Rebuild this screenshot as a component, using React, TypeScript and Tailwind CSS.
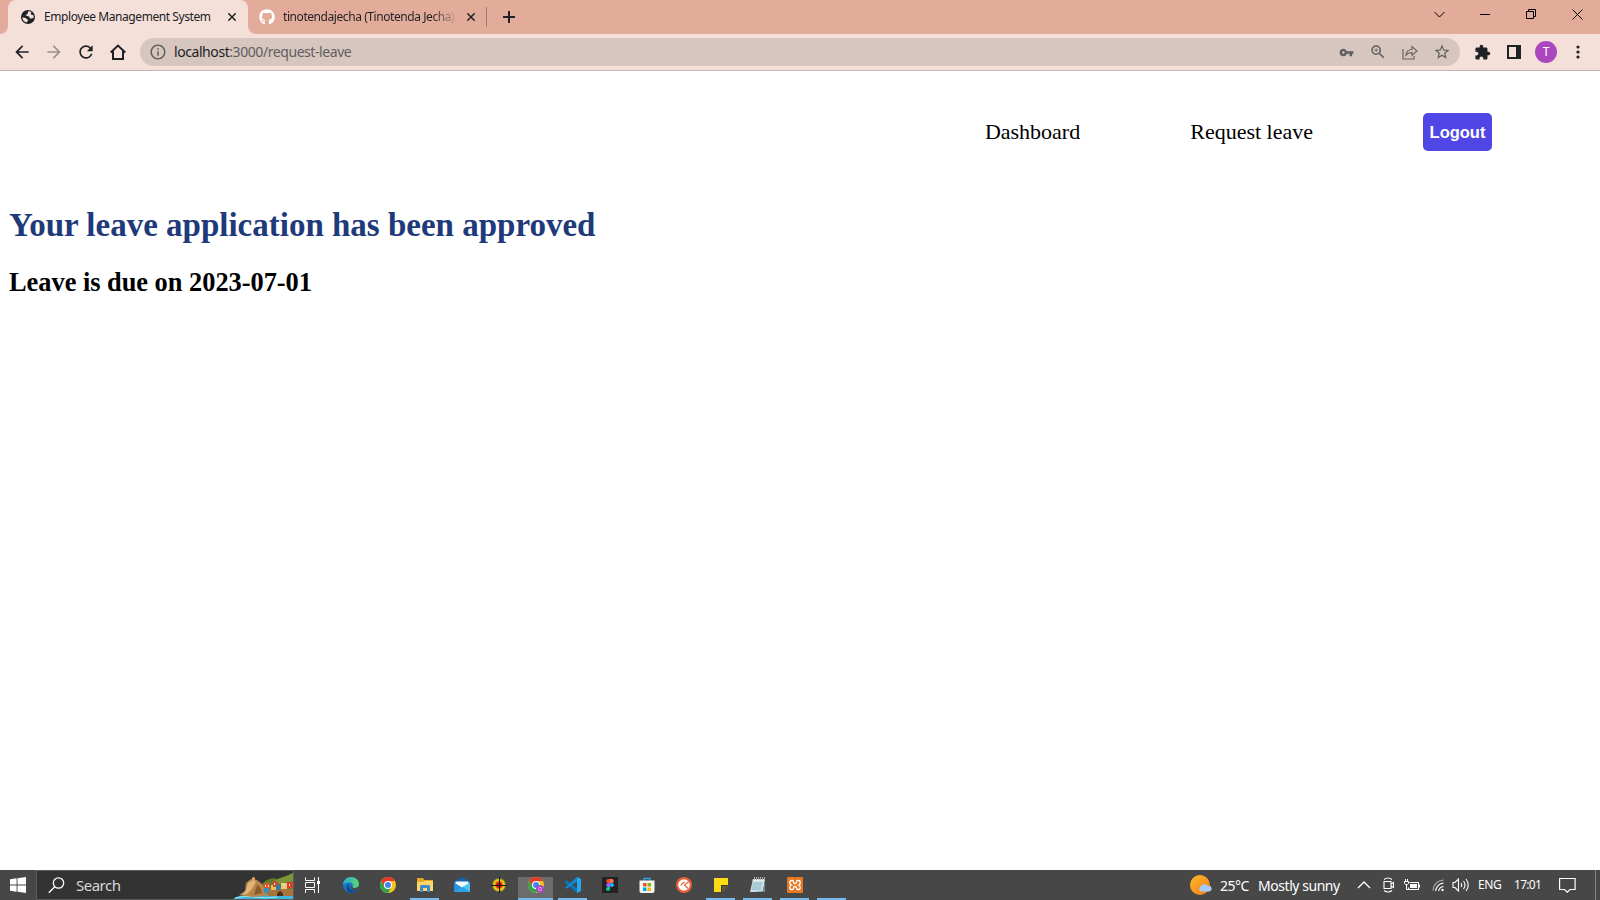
import type { ReactNode } from 'react';
import {
  MdArrowBack,
  MdArrowForward,
  MdExtension,
  MdOutlineInfo,
  MdRefresh,
  MdStarBorder,
  MdVpnKey,
  MdZoomIn,
} from 'react-icons/md';
import { FaGithub } from 'react-icons/fa';

function TabStrip() {
  return (
    <div className="flex h-[34px] bg-[#e3ab9a] pl-2 text-[12px] text-[#202124]">
      <div className="relative flex w-[240px] items-center rounded-t-lg bg-[#f5e0d9] pl-3">
        <svg className="absolute bottom-0 -left-2" width="8" height="8" viewBox="0 0 8 8">
          <path d="M8 0v8H0a8 8 0 0 0 8-8z" fill="#f5e0d9" />
        </svg>
        <svg className="absolute -right-2 bottom-0" width="8" height="8" viewBox="0 0 8 8">
          <path d="M0 0v8h8a8 8 0 0 1-8-8z" fill="#f5e0d9" />
        </svg>
        <svg className="ml-px shrink-0" width="14" height="14" viewBox="0 0 14 14">
          <circle cx="7" cy="7" r="7" fill="#202124" />
          <path
            d="M7.300 1.300C6.500 2.200 7.300 3.300 6.500 4 5.500 4.600 4.700 4.300 4.700 5.500c0 .9 2.500.4 3.300.9.9.6.3 1.900 1.400 2.100 1.500.2 2.200-.3 3.200-.7A5.700 5.700 0 0 0 12.200 4.700C11 5.200 10 4.800 9.800 3.800c-.1-.8.8-1 .6-1.700A5.600 5.600 0 0 0 7.300 1.300z"
            fill="#f5e0d9"
          />
          <path d="M1.300 7.500c1.500-.3 3 .1 3.900 1 .8.8 1.900.8 1.700 1.900-.1.900-1 .9-1.300 2A5.700 5.700 0 0 1 1.300 7.500z" fill="#f5e0d9" />
        </svg>
        <span className="ml-[9px] w-[184px] tracking-[-0.43px] whitespace-nowrap">Employee Management System</span>
        <CloseGlyph />
      </div>
      <div className="flex w-[239px] items-center pl-[11px]">
        <FaGithub className="size-4 shrink-0 text-white" />
        <span className="ml-2 w-[175px] bg-linear-to-r from-[#202124] from-85% to-[#e3ab9a] bg-clip-text tracking-[-0.43px] whitespace-nowrap text-transparent">
          tinotendajecha (Tinotenda Jecha)
        </span>
        <span className="ml-[9px] flex">
          <CloseGlyph />
        </span>
        <span className="ml-auto h-5 w-px bg-[#a07a6f]" />
      </div>
      <div className="flex w-11 items-center justify-center">
        <svg width="12" height="12" viewBox="0 0 12 12" stroke="#202124" strokeWidth="2">
          <path d="M6 0v12M0 6h12" />
        </svg>
      </div>
      <div className="ml-auto flex h-7 items-center">
        <WindowButton>
          <path d="M0.500 3l5 5 5-5" />
        </WindowButton>
        <WindowButton>
          <path d="M0 5.500h10" />
        </WindowButton>
        <WindowButton>
          <path d="M0.500 2.500h7v7h-7zM2.500 2.500v-2h7v7h-2" />
        </WindowButton>
        <WindowButton>
          <path d="M0.500 0.500l10 10M10.500 0.500l-10 10" />
        </WindowButton>
      </div>
    </div>
  );
}

function CloseGlyph() {
  return (
    <svg className="shrink-0" width="8" height="8" viewBox="0 0 8 8" stroke="#202124" strokeWidth="1.500">
      <path d="M0.300 0.300l7.400 7.400M7.700 0.300l-7.400 7.400" />
    </svg>
  );
}

function WindowButton({ children }: { children: ReactNode }) {
  return (
    <div className="flex w-[46px] justify-center">
      <svg width="11" height="11" viewBox="0 0 11 11" fill="none" stroke="#000">
        {children}
      </svg>
    </div>
  );
}

function Cell({ children }: { children: ReactNode }) {
  return <div className="flex w-8 shrink-0 items-center justify-center">{children}</div>;
}

function Toolbar() {
  return (
    <div className="flex h-[37px] items-center border-b border-[#c4b3ae] bg-[#f5e0d9] pl-1.5 text-[#202124]">
      <Cell>
        <MdArrowBack className="size-5" />
      </Cell>
      <Cell>
        <MdArrowForward className="size-5 text-[#9c8e8b]" />
      </Cell>
      <Cell>
        <MdRefresh className="size-5" />
      </Cell>
      <Cell>
        <svg width="16" height="16" viewBox="0 0 16 16" fill="none" stroke="#202124" strokeWidth="2">
          <path d="M0.700 8.500L8 1.600l7.300 6.900M3 7v8h3.500h3H13V7" />
        </svg>
      </Cell>
      <div className="ml-1.5 flex h-7 w-[1320px] items-center rounded-full bg-[#d7c5bf] pr-0.5 pl-[9px] text-[#5f5f60]">
        <MdOutlineInfo className="size-[18px]" />
        <div className="mb-px ml-[7px] flex-1 text-[14px] tracking-[-0.43px]">
          <span className="text-[#202124]">localhost</span>:3000/request-leave
        </div>
        <Cell>
          <MdVpnKey className="size-[15px]" />
        </Cell>
        <Cell>
          <MdZoomIn className="size-[18px]" />
        </Cell>
        <Cell>
          <svg width="16" height="15" viewBox="0 0 16 15" fill="none" stroke="#6b6564" strokeWidth="1.200">
            <path d="M1 4v10h11v-3" />
            <path d="M4 10c.4-3.500 2.500-5.500 6-5.500V1.500L15 6l-5 4.500V7.600C7.200 7.500 5.400 8.300 4 10z" />
          </svg>
        </Cell>
        <Cell>
          <MdStarBorder className="size-[18px]" />
        </Cell>
      </div>
      <div className="ml-1.5 flex">
        <Cell>
          <MdExtension className="size-[17px]" />
        </Cell>
        <Cell>
          <svg width="14" height="14" viewBox="0 0 14 14">
            <path d="M0 0h14v14H0zM2 2v10h7V2z" fill="#202124" fillRule="evenodd" />
          </svg>
        </Cell>
        <Cell>
          <div className="flex size-[22px] items-center justify-center rounded-full bg-[#ab47bc] font-['Roboto',sans-serif] text-[12px] text-white">
            T
          </div>
        </Cell>
        <Cell>
          <svg width="4" height="14" viewBox="0 0 4 14" fill="#202124">
            <circle cx="2" cy="2" r="1.600" />
            <circle cx="2" cy="7" r="1.600" />
            <circle cx="2" cy="12" r="1.600" />
          </svg>
        </Cell>
      </div>
    </div>
  );
}

function LeavePage() {
  return (
    <main className="flex-1 bg-white px-[9px] font-['Liberation_Serif',serif] text-black">
      <nav className="flex items-center justify-end pt-[42px] pr-[99px] text-[22px]">
        <a className="mr-[110px] pb-0.5">Dashboard</a>
        <a className="mr-[110px] pb-0.5">Request leave</a>
        <button className="h-[38px] w-[69px] rounded-[5px] bg-[#4f46e5] font-['Liberation_Sans',sans-serif] text-[16.5px] font-bold text-white">
          Logout
        </button>
      </nav>
      <h1 className="mt-[55px] text-[33px] leading-[38px] font-bold text-[#1e3a7b]">
        Your leave application has been approved
      </h1>
      <h2 className="mt-[23px] text-[26.4px] leading-[30px] font-bold tracking-[-0.02px]">Leave is due on 2023-07-01</h2>
    </main>
  );
}

function IslandArt() {
  return (
    <svg className="ml-auto shrink-0" width="60" height="28" viewBox="0 0 60 28">
      <path d="M28 14Q36 5 44 8Q52 5 60 2V20H28z" fill="#5f7b2e" />
      <path d="M42 9Q52 7 60 2V10L46 13z" fill="#7d9638" />
      <path d="M0 28Q5 24 16 24Q33 25 48 22L60 25V28z" fill="#3db7dc" />
      <path d="M2 27Q12 24 22 26T44 26" fill="none" stroke="#a9e4ee" />
      <path d="M6 24L12 20L13 12L18 8L24 9L29 13L33 19L38 24L20 26z" fill="#b98446" />
      <path d="M13 19l2-7 5-3 3 2-4 7-5 5-5 1z" fill="#e0b474" />
      <path d="M24 14l3 2 2 6-8 2z" fill="#8a5b2c" />
      <path d="M31 20Q42 16 60 18V25H36z" fill="#a9743a" />
      <path d="M44 25v-2q3-6 6 0v2z" fill="#46311f" />
      <path d="M19 10V7q1.500-2 3 0v3z" fill="#e0a36e" />
      <path d="M31 12h6v8h-6z" fill="#e2532f" />
      <path d="M38 14h5v5h-5z" fill="#e8c257" />
      <path d="M40 10h5v6h-5z" fill="#c94b34" />
      <path d="M43 14h4v5h-4z" fill="#3879b5" />
      <path d="M48 12h6v6h-6z" fill="#eec783" />
      <path d="M54 11h6v6h-6z" fill="#d6402c" />
      <path d="M31 17h5v5h-5z" fill="#398ec2" />
      <path d="M32 14h1v2h-1zM35 14h1v2h-1zM41 12h1v2h-1zM50 13h1v2h-1zM56 13h1v2h-1z" fill="#ffe8b0" />
    </svg>
  );
}

type TaskState = 'idle' | 'open' | 'active';

function TaskItem({ state = 'idle', children }: { state?: TaskState; children?: ReactNode }) {
  return (
    <div className="flex w-[37px] shrink-0 justify-center">
      <div
        className={
          state === 'active'
            ? 'mt-[7px] flex h-[23px] w-[35px] justify-center border-b-2 border-[#76b9ed] bg-[#6c6c6c]'
            : state === 'open'
              ? 'flex h-[30px] w-[29px] justify-center border-b-2 border-[#76b9ed] pt-[7px]'
              : 'flex h-[30px] w-[29px] justify-center pt-[7px]'
        }
      >
        <svg width="16" height="16" viewBox="0 0 16 16">
          {children}
        </svg>
      </div>
    </div>
  );
}

function ChromeMark() {
  return (
    <>
      <circle cx="8" cy="8" r="8" fill="#fbc116" />
      <path d="M8 4h6.930A8 8 0 0 0 1.070 4L4.540 10z" fill="#e33b2e" />
      <path d="M1.070 4A8 8 0 0 0 8 16l3.460-6H4.540z" fill="#31a350" />
      <circle cx="8" cy="8" r="4" fill="#fff" />
      <circle cx="8" cy="8" r="3" fill="#4285f4" />
    </>
  );
}

function TaskIcons() {
  return (
    <div className="flex pl-px">
      <div className="-ml-0.5 pr-0.5">
        <TaskItem>
          <path d="M1.500 0.500V3.500H10.500V0.500M1.500 16V12.500H10.500V16M1.500 5.500h9v5h-9zM14.500 0v16" fill="none" stroke="#fff" />
          <path d="M13 4h3v3h-3z" fill="#fff" />
        </TaskItem>
      </div>
      <TaskItem>
        <defs>
          <linearGradient id="edgeTop" x1="0" x2="1">
            <stop stopColor="#2ba9df" />
            <stop offset="1" stopColor="#5cd566" />
          </linearGradient>
        </defs>
        <circle cx="8" cy="8" r="8" fill="#1476c6" />
        <path d="M0 8C0 3 4 0 8 0c5 0 8 3.500 8 7 0 2.500-2 4-4.500 4-2 0-2.500-.8-2-1.500 1-1.500 0-4-2.700-4C3.500 5.500.5 7 0 8z" fill="url(#edgeTop)" />
        <path d="M6 7c-1.500 4 2 7 5.500 6.500 1.500-.2 2.500-.8 3.200-1.300C12 17.500 3 17 3.500 10.500 3.700 8.500 4.800 7.300 6 7z" fill="#114a8b" />
        <path d="M9.500 9.500c-.5.8 0 1.500 2 1.500 1.500 0 2.800-.5 3.700-1.600l.8.800-1.300 2c-3 2-7.700.3-7.200-3.200z" fill="#484848" />
      </TaskItem>
      <TaskItem>
        <ChromeMark />
      </TaskItem>
      <TaskItem state="open">
        <path d="M0 1h6l1.500 2H16v11H0z" fill="#e6a723" />
        <path d="M0 5h6l1.500-1H16v10H0z" fill="#ffd768" />
        <path d="M3 15V9.500Q3 8 4.500 8h7Q13 8 13 9.500V15h-3v-4H6v4z" fill="#3c8ad0" />
      </TaskItem>
      <TaskItem>
        <path d="M0 5L8 0l8 5v10H0z" fill="#1267b4" />
        <path d="M1.500 4.500h13V8L8 11 1.500 8z" fill="#f3f8fc" />
        <path d="M0 5.500L8 10.500 0 15z" fill="#2990dc" />
        <path d="M16 5.500V15H0z" fill="#4fc3f5" />
        <path d="M0 15L9 10l7 5z" fill="#2ba1e4" />
      </TaskItem>
      <TaskItem>
        <circle cx="8" cy="8" r="7" fill="#7a8b24" />
        <circle cx="8" cy="8" r="6" fill="#f1ca16" />
        <circle cx="8" cy="8" r="4.200" fill="#ef7a17" />
        <circle cx="8" cy="8" r="3" fill="#d71214" />
        <path d="M8.500 0v16M0 8.500h16" stroke="#111" />
      </TaskItem>
      <TaskItem state="active">
        <ChromeMark />
        <circle cx="12" cy="12" r="4" fill="#ab47bc" />
        <path d="M10.700 10.500h2.600v3h-2.600z" fill="none" stroke="#d9a5e2" strokeWidth=".8" />
      </TaskItem>
      <TaskItem state="open">
        <path d="M0 4.500L1.500 3.300 12 11.500V16L0 5.700z" fill="#0877b9" />
        <path d="M12 0L0 10.500l1.500 1.200L12 4.500z" fill="#0b8bd0" />
        <path d="M12 0l4 2v12l-4 2z" fill="#29a7ef" />
      </TaskItem>
      <TaskItem>
        <path d="M0 0h16v16H0z" fill="#222224" />
        <path d="M8 2H6.200a2 2 0 0 0 0 4H8z" fill="#f24e1e" />
        <path d="M8 2h1.800a2 2 0 0 1 0 4H8z" fill="#ff7262" />
        <path d="M8 6H6.200a2 2 0 0 0 0 4H8z" fill="#a259ff" />
        <circle cx="9.900" cy="8" r="2" fill="#1abcfe" />
        <path d="M8 10H6.200A2 2 0 1 0 8 12z" fill="#0acf83" />
      </TaskItem>
      <TaskItem>
        <path d="M5 4V1.500h6V4" fill="none" stroke="#27a9e6" strokeWidth="1.300" />
        <path d="M0.500 3.500h15V14q0 2-2 2h-11q-2 0-2-2z" fill="#f5f5f5" />
        <path d="M4 6h3.500v3.500H4z" fill="#f05022" />
        <path d="M8.500 6H12v3.500H8.500z" fill="#7eb900" />
        <path d="M4 10.500h3.500V14H4z" fill="#00a3ee" />
        <path d="M8.500 10.500H12V14H8.500z" fill="#feb800" />
      </TaskItem>
      <TaskItem>
        <circle cx="8" cy="8" r="8" fill="#ea6035" />
        <circle cx="8" cy="8" r="5.800" fill="#fff" />
        <path d="M13 4.500L8.500 8l3.500 3.500M5 8.500q.5-2.500 4-3.500" fill="none" stroke="#ea6035" strokeWidth="1.100" />
      </TaskItem>
      <TaskItem state="open">
        <path d="M1 1h14v8l-6 6H1z" fill="#fddb10" />
        <path d="M8 8h7v1l-6 6H8z" fill="#383838" />
        <path d="M9 15V9h6z" fill="#57564c" />
      </TaskItem>
      <TaskItem state="open">
        <path d="M3 2h12l-2 13H0z" fill="#c5e0e4" />
        <path d="M3 2h12l-.4 2.500H2.500z" fill="#e4edeb" />
        <path d="M15 2v13H5l8-1z" fill="#718b93" />
        <path d="M3 6h9M2.500 8h9M2.200 10h9M2 12h9" stroke="#78adb9" strokeWidth=".8" />
        <path d="M4.500 0v3M6.500 0v3M8.500 0v3M10.500 0v3M12.500 0v3M14.500 0v3" stroke="#a5adac" />
      </TaskItem>
      <TaskItem state="open">
        <rect width="16" height="16" rx="1" fill="#e87722" />
        <path
          d="M5.500 3.500H4.500Q2.800 3.500 2.800 5.500T4.300 8Q2.800 8.500 2.800 10.500T4.500 12.500H5.500Q6.500 12.500 6.500 11T8 9.500 9.500 11 10.500 12.500H11.500Q13.200 12.500 13.200 10.500T11.700 8Q13.200 7.500 13.200 5.500T11.500 3.500H10.500Q9.500 3.500 9.500 5T8 6.500 6.500 5 5.500 3.500z"
          fill="none"
          stroke="#fff"
          strokeWidth="1.300"
        />
      </TaskItem>
      <TaskItem state="open" />
    </div>
  );
}

function Tray() {
  return (
    <div className="ml-auto flex items-center text-white">
      <svg width="22" height="20" viewBox="0 0 22 20">
        <defs>
          <linearGradient id="sun" x2="1" y2="1">
            <stop stopColor="#fcbd2c" />
            <stop offset="1" stopColor="#f27816" />
          </linearGradient>
        </defs>
        <circle cx="10" cy="10" r="10" fill="url(#sun)" />
        <path d="M11 16.500a3 3 0 0 1 0-5.500 4 4 0 0 1 7 0 2.800 2.800 0 0 1 1.500 5.500z" fill="#a9caf4" />
      </svg>
      <span className="ml-2 w-[38px] text-[14px] tracking-[-0.5px]">25°C</span>
      <span className="w-[99px] text-[14px] tracking-[-0.45px] whitespace-nowrap">Mostly sunny</span>
      <svg width="14" height="8" viewBox="0 0 14 8" fill="none" stroke="#fff" strokeWidth="1.300">
        <path d="M1 7l6-6 6 6" />
      </svg>
      <svg className="ml-3" width="12" height="16" viewBox="0 0 12 16" fill="none" stroke="#fff" strokeWidth="1.100">
        <path d="M1 2.500Q5 -0.500 9 2.500M1 13.500q4 3 8 0M1 4.500h7v7H1zM8 7l2.500-1.500v5L8 9" />
      </svg>
      <svg className="ml-[9px]" width="16" height="12" viewBox="0 0 16 12" fill="none" stroke="#fff">
        <path d="M5.500 3.500h9v7h-10v-2M1.500 0v2.500M3.500 0v2.500M0.500 2.500h4v2l-1 1h-2l-1-1zM2.500 5.500v5h2" />
        <path d="M6 5h7v4H6z" fill="#fff" stroke="none" />
        <path d="M15.500 5.500v3" />
      </svg>
      <svg className="ml-[11px]" width="14" height="14" viewBox="0 0 14 14" fill="none" stroke="#fff" strokeWidth="1.100">
        <path d="M7.500 13A6 6 0 0 1 12.500 8.500M4.500 13A9 9 0 0 1 12.500 5" />
        <path d="M2 12.500A11 11 0 0 1 12.500 2" stroke="#b5b5b5" />
        <circle cx="11.500" cy="12" r="1.200" fill="#fff" stroke="none" />
      </svg>
      <svg className="ml-[7px]" width="17" height="14" viewBox="0 0 17 14" fill="none" stroke="#fff" strokeWidth="1.100">
        <path d="M1 4.500h2L6.500 1v12L3 9.500H1zM9 5q1.500 2 0 4M11.500 3q3 4 0 8M14 1q4.500 6 0 12" />
      </svg>
      <span className="ml-[9px] w-9 text-[12px] tracking-[-0.4px]">ENG</span>
      <span className="w-[45px] text-[12px] tracking-[-0.7px]">17:01</span>
      <svg width="17" height="16" viewBox="0 0 17 16" fill="none" stroke="#fff" strokeWidth="1.200">
        <path d="M0.600 1.500h15.500v11H11L8.300 15.200 5.600 12.500h-5z" />
      </svg>
      <div className="ml-[19px] h-[30px] w-[5px] border-l border-[#858585]" />
    </div>
  );
}

function Taskbar() {
  return (
    <footer className="flex h-[30px] bg-[#474747]">
      <div className="flex w-9 items-center justify-center">
        <svg width="16" height="16" viewBox="0 0 16 16" fill="#fff">
          <path d="M0 2.300L6.600 1.300V7.500H0zM7.500 1.200L16 0v7.500H7.500zM0 8.500h6.600v6.200L0 13.700zM7.500 8.500H16V16l-8.500-1.200z" />
        </svg>
      </div>
      <div className="flex w-[258px] items-center border border-[#5a5a5a] bg-[#333] pl-[11px]">
        <svg width="17" height="17" viewBox="0 0 17 17" fill="none" stroke="#fff" strokeWidth="1.300">
          <circle cx="10.500" cy="6" r="5.200" />
          <path d="M6.800 9.800L0.800 15.800" />
        </svg>
        <span className="ml-[11px] text-[15px] tracking-[-0.5px] text-[#d8d8d8]">Search</span>
        <IslandArt />
      </div>
      <TaskIcons />
      <Tray />
    </footer>
  );
}

export default function App() {
  return (
    <div className="flex h-[900px] w-[1600px] flex-col overflow-hidden font-['Noto_Sans',sans-serif]">
      <TabStrip />
      <Toolbar />
      <LeavePage />
      <Taskbar />
    </div>
  );
}
